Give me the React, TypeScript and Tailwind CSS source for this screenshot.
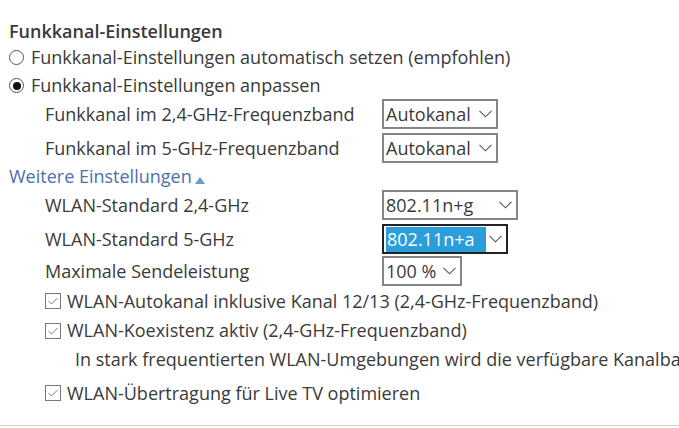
import React from "react";

const Chevron = () => (
  <svg width="13" height="8" viewBox="0 0 13 8" className="shrink-0">
    <path d="M0.5 0.8 L6.5 6.8 L12.5 0.8" fill="none" stroke="#555" strokeWidth="1.1" />
  </svg>
);

const Select = ({ value, w, focused }: { value: string; w: string; focused?: boolean }) => (
  <div
    className={`${w} h-[30px] flex items-center justify-between pl-[2px] pr-[4px] ${
      focused ? "border-2 border-[#222]" : "border-2 border-[#858585]"
    } bg-white`}
  >
    {focused ? (
      <span className="bg-[#2a9edb] text-white h-[25px] leading-[25px] w-[100px] pl-[1px]">{value}</span>
    ) : (
      <span className="leading-[24px]">{value}</span>
    )}
    <Chevron />
  </div>
);

const Radio = ({ checked }: { checked?: boolean }) => (
  <span className="w-[15px] h-[15px] rounded-full border border-[#555] bg-white flex items-center justify-center shrink-0">
    {checked && <span className="w-[8px] h-[8px] rounded-full bg-[#111]" />}
  </span>
);

const Check = () => (
  <span className="w-[16px] h-[16px] border border-[#777] bg-white flex items-center justify-center shrink-0">
    <svg width="12" height="10" viewBox="0 0 12 10">
      <path d="M1.5 5 L4.5 8 L10.5 2" fill="none" stroke="#6a7f95" strokeWidth="1" />
    </svg>
  </span>
);

export default function App() {
  return (
    <div className="w-[679px] h-[428px] bg-white overflow-hidden font-['Open_Sans',sans-serif] text-[18px] text-[#3a3a3a] relative">
      <div className="pt-[20px] pl-[9px]">
        <div className="h-[22px] leading-[22px] font-semibold">Funkkanal-Einstellungen</div>
        <div className="h-[30px] flex items-center gap-[7px]">
          <Radio />
          <span>Funkkanal-Einstellungen automatisch setzen (empfohlen)</span>
        </div>
        <div className="h-[27px] flex items-center gap-[7px]">
          <Radio checked />
          <span>Funkkanal-Einstellungen anpassen</span>
        </div>
        <div className="pl-[36px] flex flex-col gap-[4px]">
          <div className="flex items-center h-[30px]">
            <span className="w-[337px]">Funkkanal im 2,4-GHz-Frequenzband</span>
            <Select value="Autokanal" w="w-[116px]" />
          </div>
          <div className="flex items-center h-[30px]">
            <span className="w-[337px]">Funkkanal im 5-GHz-Frequenzband</span>
            <Select value="Autokanal" w="w-[116px]" />
          </div>
        </div>
        <div className="h-[27px] flex items-center text-[#4d70ad]">
          <span>Weitere Einstellungen</span>
          <svg width="10" height="7" viewBox="0 0 10 7" className="ml-[3px] mt-[8px]">
            <path d="M0 7 L5 0 L10 7 Z" fill="#6d9ad3" />
          </svg>
        </div>
        <div className="pl-[36px] flex flex-col">
          <div className="flex items-center h-[30px]">
            <span className="w-[337px]">WLAN-Standard 2,4-GHz</span>
            <Select value="802.11n+g" w="w-[136px]" />
          </div>
          <div className="flex items-center h-[30px] mt-[4px]">
            <span className="w-[337px]">WLAN-Standard 5-GHz</span>
            <Select value="802.11n+a" w="w-[126px]" focused />
          </div>
          <div className="flex items-center h-[30px] mt-[2px]">
            <span className="w-[337px]">Maximale Sendeleistung</span>
            <Select value="100 %" w="w-[80px]" />
          </div>
        </div>
        <div className="pl-[36px] flex flex-col whitespace-nowrap">
          <div className="h-[30px] flex items-center gap-[6px]">
            <Check />
            <span>WLAN-Autokanal inklusive Kanal 12/13 (2,4-GHz-Frequenzband)</span>
          </div>
          <div className="h-[29px] flex items-center gap-[6px]">
            <Check />
            <span>WLAN-Koexistenz aktiv (2,4-GHz-Frequenzband)</span>
          </div>
          <div className="h-[28px] flex items-center pl-[30px]">
            <span>In stark frequentierten WLAN-Umgebungen wird die verfügbare Kanalbandbreite reduziert</span>
          </div>
          <div className="h-[30px] mt-[5px] flex items-center gap-[6px]">
            <Check />
            <span>WLAN-Übertragung für Live TV optimieren</span>
          </div>
        </div>
      </div>
      <div className="absolute left-0 right-0 top-[425px] h-px bg-[#cfcfcf]" />
    </div>
  );
}
